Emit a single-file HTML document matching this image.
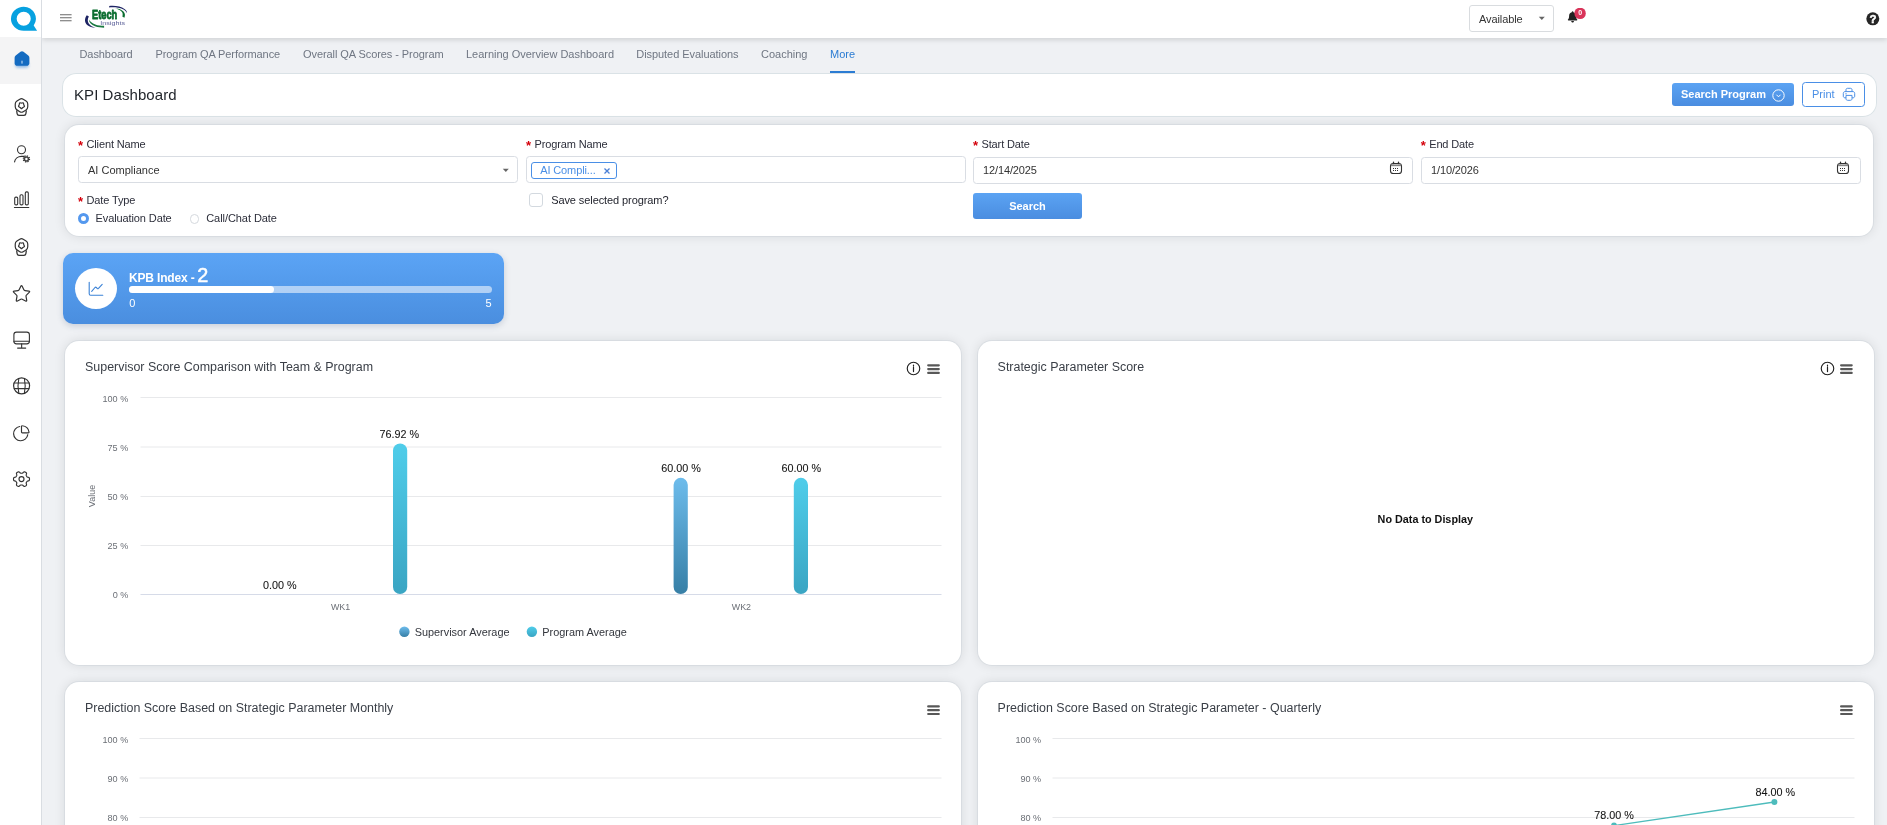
<!DOCTYPE html>
<html lang="en">
<head>
<meta charset="utf-8">
<title>KPI Dashboard</title>
<style>
*{box-sizing:border-box}
html,body{margin:0;padding:0}
body{width:1887px;height:825px;overflow:hidden;background:#eff1f4;font-family:"Liberation Sans",sans-serif;color:#222;position:relative;font-size:11px}
#wrap{position:absolute;left:0;top:0;width:1887px;height:825px;overflow:hidden;will-change:transform}
.abs{position:absolute}
#side{position:absolute;left:0;top:0;width:42px;height:825px;background:#fff;border-right:1px solid #d9dde2}
#side .act{position:absolute;left:0;top:37px;width:41px;height:47px;background:#f4f4f5}
#side svg{position:absolute}
#top{position:absolute;left:42px;top:0;width:1845px;height:38px;background:#fff;box-shadow:0 2px 5px rgba(0,0,0,.13)}
#tabs{position:absolute;left:0;top:0}
#tabs span{position:absolute;top:47px;white-space:nowrap;font-size:11px;color:#6f7682;line-height:14px}
#tabs span.on{color:#2b7cd3}
.card{position:absolute;background:#fff;border-radius:14px;box-shadow:0 0 0 1px rgba(200,208,214,.42),0 0 12px rgba(20,25,30,.11)}
.lbl{position:absolute;font-size:11px;color:#2c2e3a;white-space:nowrap;line-height:14px;letter-spacing:-.13px}
.lbl b{color:#d4000b;font-weight:bold;font-size:13px;margin-right:3.550px;position:relative;top:2.200px}
.inp{position:absolute;height:27px;border:1px solid #d9dde3;border-radius:3.500px;background:#fff;font-size:11px;color:#333;line-height:25px;padding-left:9px;white-space:nowrap}
.ttl{position:absolute;font-size:12px;color:#3a3f47;white-space:nowrap;line-height:15px}
svg text{font-family:"Liberation Sans",sans-serif}
</style>
</head>
<body>
<div id="wrap">

<!-- top bar -->
<div id="top">
  <!-- hamburger -->
  <svg class="abs" style="left:17px;top:12px" width="14" height="11" viewBox="0 0 14 11">
    <path d="M1 2.800h11.600M1 5.800h11.600M1 8.700h11.600" stroke="#6a6a6a" stroke-width="1.100" fill="none"/>
  </svg>
  <!-- Etech Insights logo -->
  <svg class="abs" style="left:42px;top:4px" width="46" height="26" viewBox="84 4 46 26">
    <path d="M86.800 15.200C84.300 18.500 84.300 22.500 87.500 25.200C89.800 27 92.500 27.700 95.500 27.600C92.500 27 90.300 25.800 88.900 23.800C87.300 21.500 87.500 19 88.900 16.600Z" fill="#1d2363"/>
    <path d="M88.900 19.600C89.100 22.700 91.300 25 95 26.300C98 27.300 101 27.600 104.100 27.700L104.100 25.700C101 25.700 98 25.400 95.300 24.400C92.200 23.300 90.100 21.800 88.900 19.600Z" fill="#1a7a41"/>
    <path d="M109.200 6C115 5.400 121 6.500 124.500 9C126.300 10.300 127.200 11.700 126.800 13.200C126.300 11.500 125 10.200 123 9.200C119 7.300 114 7.100 109.200 7.400Z" fill="#1d2363"/>
    <path d="M114 8C118 8.300 121.500 9.500 123.500 11.500C125.200 13.200 125.300 15.500 124.400 17.800L122.300 16.600C123 14.800 122.800 13 121.500 11.600C119.800 9.800 117 8.700 114 8Z" fill="#0b6e30"/>
    <text x="92" y="18.800" font-size="12.300" font-weight="bold" fill="#0a6d2f" stroke="#0a6d2f" stroke-width=".8" stroke-linejoin="round" textLength="25.200" lengthAdjust="spacingAndGlyphs">Etech</text>
    <text x="100.300" y="24.700" font-size="6.200" fill="#5a5f98" textLength="24.700" lengthAdjust="spacingAndGlyphs">Insights</text>
  </svg>
  <!-- Available -->
  <div class="abs" style="left:1427px;top:5px;width:85px;height:27px;border:1px solid #d9dcdf;border-radius:3px;background:#fff;font-size:11px;line-height:26.500px;letter-spacing:-.1px;padding-left:9px;color:#333">Available</div>
  <svg class="abs" style="left:1496px;top:16px" width="8" height="5" viewBox="0 0 8 5"><path d="M.8 .8h6L3.800 4z" fill="#666"/></svg>
  <!-- bell -->
  <svg class="abs" style="left:1524px;top:8px" width="24" height="18" viewBox="0 0 24 18">
    <path d="M6.600 3.200c.5 0 .8 .3 .8 .8v.3c1.700 .4 2.700 1.800 2.700 3.600c0 2 .5 2.900 1.100 3.600c.3 .3 .2 .9-.4 .9H2.400c-.6 0-.7-.6-.4-.9c.6-.7 1.100-1.600 1.100-3.600c0-1.800 1-3.200 2.700-3.600V4c0-.5 .3-.8 .8-.8zM5.200 13.100h2.800c0 .9-.6 1.500-1.400 1.500s-1.400-.6-1.400-1.500z" fill="#222"/>
    <circle cx="14.100" cy="5.400" r="5.700" fill="#d9345a"/>
    <text x="14.100" y="7.300" font-size="7" font-weight="bold" fill="#fff" text-anchor="middle">0</text>
  </svg>
  <!-- help -->
  <svg class="abs" style="left:1823px;top:11px" width="16" height="16" viewBox="0 0 16 16">
    <circle cx="7.800" cy="7.800" r="6.500" fill="#262626"/>
    <text x="7.900" y="11.700" font-size="11.500" font-weight="bold" fill="#fff" stroke="#fff" stroke-width=".45" text-anchor="middle">?</text>
  </svg>
</div>

<!-- sidebar -->
<div id="side">
  <div class="act"></div>
<svg class="abs" style="left:0;top:0" width="42" height="825" viewBox="0 0 42 825">
  <g fill="none" stroke="#333" stroke-width="1.100" stroke-linecap="round">
    <path d="M19.80 99.16Q21.50 98.10 23.20 99.16L26.05 100.94Q27.75 102.00 27.75 104.00L27.75 106.80Q27.75 108.80 26.07 109.88L23.18 111.72Q21.50 112.80 19.82 111.72L16.93 109.88Q15.25 108.80 15.25 106.80L15.25 104.00Q15.25 102.00 16.95 100.94Z" stroke-width="1.200"/>
    <path d="M21.86 108.45Q21.50 108.80 21.14 108.45L20.45 107.79Q20.09 107.44 19.65 107.21L18.80 106.76Q18.36 106.52 18.58 106.07L19.00 105.21Q19.22 104.76 19.30 104.27L19.47 103.32Q19.56 102.83 20.06 102.90L21.00 103.03Q21.50 103.10 22.00 103.03L22.94 102.90Q23.44 102.83 23.53 103.32L23.70 104.27Q23.78 104.76 24.00 105.21L24.42 106.07Q24.64 106.52 24.20 106.76L23.35 107.21Q22.91 107.44 22.55 107.79Z" stroke-width="1.200"/>
    <path d="M16.700 110.8l.4 2.800c.15 1.100 .8 1.700 1.900 1.700h5c1.100 0 1.750-.6 1.900-1.700l.4-2.800" stroke-width="1.250"/>
    <!-- user gear -->
    <circle cx="21.500" cy="149.800" r="4"/>
    <path d="M14.600 161.800C15 158.500 18 156.400 21.500 156.400L24 156.400" stroke-width="1.200"/>
    <circle cx="26.400" cy="158.900" r="2" stroke-width="1.500" stroke="#444"/>
    <circle cx="26.400" cy="158.900" r="3.100" stroke-width="1.300" stroke-dasharray="1.250 1.185" stroke-linecap="butt"/>
    <!-- bars -->
    <rect x="14.700" y="197.100" width="3" height="7.800" rx="1.200"/>
    <rect x="20" y="194.700" width="3" height="10.200" rx="1.200"/>
    <rect x="25.300" y="191.900" width="3" height="13" rx="1.200"/>
    <path d="M14.400 207.500H28.800"/>
    <path d="M19.80 239.16Q21.50 238.10 23.20 239.16L26.05 240.94Q27.75 242.00 27.75 244.00L27.75 246.80Q27.75 248.80 26.07 249.88L23.18 251.72Q21.50 252.80 19.82 251.72L16.93 249.88Q15.25 248.80 15.25 246.80L15.25 244.00Q15.25 242.00 16.95 240.94Z" stroke-width="1.200"/>
    <path d="M21.86 248.45Q21.50 248.80 21.14 248.45L20.45 247.79Q20.09 247.44 19.65 247.21L18.80 246.76Q18.36 246.52 18.58 246.07L19.00 245.21Q19.22 244.76 19.30 244.27L19.47 243.32Q19.56 242.83 20.06 242.90L21.00 243.03Q21.50 243.10 22.00 243.03L22.94 242.90Q23.44 242.83 23.53 243.32L23.70 244.27Q23.78 244.76 24.00 245.21L24.42 246.07Q24.64 246.52 24.20 246.76L23.35 247.21Q22.91 247.44 22.55 247.79Z" stroke-width="1.200"/>
    <path d="M16.700 250.8l.4 2.800c.15 1.100 .8 1.700 1.900 1.700h5c1.100 0 1.750-.6 1.900-1.700l.4-2.800" stroke-width="1.250"/>
    <!-- star -->
    <path d="M20.80 286.34Q21.50 284.90 22.20 286.34L23.85 289.76Q24.20 290.48 25.00 290.59L28.76 291.11Q30.34 291.33 29.19 292.43L26.45 295.07Q25.87 295.62 26.02 296.41L26.68 300.15Q26.97 301.72 25.56 300.97L22.21 299.18Q21.50 298.80 20.79 299.18L17.44 300.97Q16.03 301.72 16.32 300.15L16.98 296.41Q17.13 295.62 16.55 295.07L13.81 292.43Q12.66 291.33 14.24 291.11L18.00 290.59Q18.80 290.48 19.15 289.76Z" stroke-linejoin="round" stroke-width="1.200"/>
    <!-- monitor -->
    <rect x="13.900" y="332.100" width="15.500" height="11.800" rx="2.600"/>
    <path d="M13.900 341.300H29.400M21.650 343.900V348M17.600 348.100H25.700"/>
    <!-- globe -->
    <g transform="translate(0,.6)"><circle cx="21.600" cy="385.200" r="8" stroke-width="1.200"/>
    <path d="M14.300 382.400H28.900M14.300 388H28.900M18.800 377.900C17.800 382.500 17.800 388 18.800 392.500M24.400 377.900C25.400 382.500 25.400 388 24.400 392.500"/></g>
    <!-- pie -->
    <path d="M19.700 426.500A7.150 7.150 0 1 0 27.800 434.700" stroke-width="1.150"/>
    <path d="M22.300 425.800C21.800 425.700 21.500 426 21.500 426.500V432C21.500 432.500 21.800 432.800 22.300 432.800H28.300C28.800 432.800 29.100 432.500 29 432C28.500 428.600 25.700 426.100 22.300 425.800Z" stroke-linejoin="round" stroke-width="1.150"/>
    <!-- gear -->
    <path d="M29.50 479.10L29.47 479.62L29.37 480.14L29.04 480.60L28.21 480.90L27.38 481.10L27.01 481.38L26.80 481.71L26.61 482.05L26.41 482.38L26.23 482.73L26.17 483.20L26.41 484.01L26.57 484.88L26.33 485.39L25.94 485.74L25.50 486.03L25.03 486.27L24.54 486.43L23.97 486.38L23.30 485.81L22.71 485.19L22.28 485.01L21.89 485.00L21.50 485.00L21.11 485.00L20.72 485.01L20.29 485.19L19.70 485.81L19.03 486.38L18.46 486.43L17.97 486.27L17.50 486.03L17.06 485.74L16.67 485.39L16.43 484.88L16.59 484.01L16.83 483.20L16.77 482.73L16.59 482.38L16.39 482.05L16.20 481.71L15.99 481.38L15.62 481.10L14.79 480.90L13.96 480.60L13.63 480.14L13.53 479.62L13.50 479.10L13.53 478.58L13.63 478.06L13.96 477.60L14.79 477.30L15.62 477.10L15.99 476.82L16.20 476.49L16.39 476.15L16.59 475.82L16.77 475.47L16.83 475.00L16.59 474.19L16.43 473.32L16.67 472.81L17.06 472.46L17.50 472.17L17.97 471.93L18.46 471.77L19.03 471.82L19.70 472.39L20.29 473.01L20.72 473.19L21.11 473.20L21.50 473.20L21.89 473.20L22.28 473.19L22.71 473.01L23.30 472.39L23.97 471.82L24.54 471.77L25.03 471.93L25.50 472.17L25.94 472.46L26.33 472.81L26.57 473.32L26.41 474.19L26.17 475.00L26.23 475.47L26.41 475.82L26.61 476.15L26.80 476.49L27.01 476.82L27.38 477.10L28.21 477.30L29.04 477.60L29.37 478.06L29.47 478.58Z" stroke-linejoin="round" stroke-width="1.150"/>
    <circle cx="21.500" cy="479.100" r="2.500" stroke-width="1.150"/>
  </g>
</svg>
  <!-- Q logo -->
  <svg style="left:10px;top:5px" width="30" height="28" viewBox="0 0 30 28">
    <path d="M13.7 1.7a12.75 12.05 0 1 0 0 24.1h13.4l-3.4-5.3a12.75 12.05 0 0 0-10-18.8zm0 5a7.05 7.05 0 1 1 0 14.1a7.05 7.05 0 0 1 0-14.1z" fill="#07a1e0" fill-rule="evenodd"/>
  </svg>
  <!-- home -->
  <svg style="left:11px;top:47px" width="22" height="26" viewBox="0 0 22 26">
    <defs><filter id="hb" x="-50%" y="-50%" width="200%" height="200%"><feGaussianBlur stdDeviation="1.600"/></filter></defs>
    <rect x="4.5" y="15.5" width="13" height="5" rx="2" fill="#2f7fd6" opacity=".55" filter="url(#hb)"/>
    <path d="M11 4.2c.5 0 1 .2 1.500 .6l4.800 3.700c.7 .5 1.100 1.300 1.100 2.200v5.500c0 1.500-1.200 2.600-2.600 2.600H6.200c-1.500 0-2.600-1.200-2.600-2.600v-5.500c0-.9 .4-1.700 1.100-2.200l4.800-3.700c.45-.4 1-.6 1.500-.6z" fill="#146bc1"/>
    <rect x="10.400" y="13.700" width="1.200" height="2.900" fill="#b3d0ee"/>
  </svg>
</div>

<!-- tabs -->
<div id="tabs">
  <span style="left:79.500px;letter-spacing:-.08px">Dashboard</span>
  <span style="left:155.500px;letter-spacing:-.09px">Program QA Performance</span>
  <span style="left:303px;letter-spacing:-.07px">Overall QA Scores - Program</span>
  <span style="left:466px;letter-spacing:-.02px">Learning Overview Dashboard</span>
  <span style="left:636.300px;letter-spacing:-.06px">Disputed Evaluations</span>
  <span style="left:761px">Coaching</span>
  <span class="on" style="left:830px">More</span>
  <div class="abs" style="left:830px;top:71px;width:25px;height:2px;background:#2b7cd3"></div>
</div>

<!-- title card -->
<div class="card" id="tcard" style="left:62px;top:73px;width:1815px;height:43.500px;box-shadow:inset 0 0 0 1px rgba(205,216,222,.75)">
  <div class="abs" id="ttext" style="left:12px;top:12px;font-size:15px;letter-spacing:.07px;line-height:19px;color:#1f2329;white-space:nowrap">KPI Dashboard</div>
  <div class="abs" id="sbtn" style="left:1610px;top:10px;width:122px;height:23px;border-radius:3px;background:linear-gradient(180deg,#5ba3f3,#4a8de0);color:#fff;font-size:11px;font-weight:bold;line-height:23px;padding-left:9px;white-space:nowrap">Search Program</div>
  <svg class="abs" style="left:1709.300px;top:14.500px" width="15" height="15" viewBox="0 0 15 15"><circle cx="7.500" cy="7.500" r="5.700" fill="none" stroke="#fff" stroke-width="1"/><path d="M5.700 7l1.800 1.800l1.800-1.800" fill="none" stroke="#fff" stroke-width="1" stroke-linecap="round" stroke-linejoin="round"/></svg>
  <div class="abs" id="pbtn" style="left:1740px;top:9px;width:63px;height:25px;border-radius:3.500px;border:1.200px solid #4a8fe6;background:#fff;color:#4a8fe6;font-size:11px;line-height:22.600px;padding-left:9px;white-space:nowrap">Print</div>
  <svg class="abs" style="left:1780px;top:14px" width="14" height="15" viewBox="0 0 14 15"><g fill="none" stroke="#4a8fe6" stroke-width="1" stroke-linejoin="round"><path d="M4 4.500V2.800c0-.9 .6-1.500 1.500-1.500h3c.9 0 1.500 .6 1.500 1.500v1.700"/><path d="M4 10.800H3c-1 0-1.700-.7-1.700-1.700V6.400c0-1 .7-1.800 1.700-1.800h8c1 0 1.700 .8 1.700 1.800v2.700c0 1-.7 1.700-1.700 1.700h-1"/><path d="M4 8.400h6v3.300c0 1-.6 1.600-1.600 1.600H5.600c-1 0-1.600-.6-1.600-1.600z"/><path d="M3.300 6.800h1.400"/></g></svg>
</div>

<!-- filter card -->
<div class="card" id="fcard" style="left:65px;top:124.500px;width:1808px;height:111.500px">
  <div class="lbl" style="left:13px;top:12.5px"><b>*</b>Client Name</div>
  <div class="inp" style="left:13px;top:31.500px;width:440px;height:27px;line-height:26.300px">AI Compliance</div>
  <svg class="abs" style="left:437px;top:43.0px" width="8" height="5" viewBox="0 0 8 5"><path d="M.8 .8h6L3.800 4z" fill="#666"/></svg>
  <div class="lbl" style="left:13px;top:68.5px"><b>*</b>Date Type</div>
  <div class="abs" style="left:12.6px;top:88.7px;width:11px;height:11px;border-radius:50%;border:3.400px solid #5498ee;background:#fff"></div>
  <div class="lbl" style="left:30.6px;top:86.400px;letter-spacing:-.11px">Evaluation Date</div>
  <div class="abs" style="left:124.5px;top:89.7px;width:9.500px;height:9.500px;border-radius:50%;border:1px solid #d5d9de;background:#fff"></div>
  <div class="lbl" style="left:141.2px;top:86.400px;letter-spacing:-.06px">Call/Chat Date</div>

  <div class="lbl" style="left:461px;top:12.5px"><b>*</b>Program Name</div>
  <div class="inp" style="left:461px;top:31.500px;width:440px;height:27px"></div>
  <div class="abs" style="left:466.2px;top:37.9px;width:86px;height:17px;border:1.200px solid #4a8fe6;border-radius:3px;background:#fff;color:#4a8fe6;font-size:11px;line-height:14.600px;letter-spacing:-.12px;padding-left:8px;white-space:nowrap">AI Compli...</div>
  <svg class="abs" style="left:538px;top:42.5px" width="8" height="8" viewBox="0 0 8 8"><path d="M1.500 1.500l5 5M6.500 1.500l-5 5" stroke="#4a7fd6" stroke-width="1.300"/></svg>
  <div class="abs" style="left:464.2px;top:68.500px;width:14px;height:14px;border:1px solid #d3d9df;border-radius:3px;background:#fff"></div>
  <div class="lbl" style="left:486.2px;top:68.8px;letter-spacing:-.09px;color:#23252e">Save selected program?</div>

  <div class="lbl" style="left:908px;top:12.500px"><b>*</b>Start Date</div>
  <div class="inp" style="left:908px;top:32.500px;width:440px;height:27px;line-height:25.400px;letter-spacing:-.12px">12/14/2025</div>
  <svg class="abs" style="left:1323.500px;top:35.500px" width="14" height="15" viewBox="0 0 14 15"><rect x="1.500" y="3.500" width="11" height="10" rx="2.800" fill="none" stroke="#333" stroke-width="1.100"/><path d="M2 5.300h10" stroke="#858585" stroke-width="1.700"/><path d="M4.500 2.100v1.400M9.500 2.100v1.400" stroke="#333" stroke-width="1.300" stroke-linecap="round"/><g fill="#333"><rect x="4" y="8" width="1" height="1"/><rect x="6" y="8" width="1" height="1"/><rect x="8" y="8" width="1" height="1"/><rect x="4" y="10" width="1" height="1"/><rect x="6" y="10" width="1" height="1"/><rect x="8" y="10" width="1" height="1"/></g></svg>
  <div class="abs" id="srch" style="left:908px;top:68.500px;width:109px;height:26px;border-radius:3px;background:linear-gradient(180deg,#5ba3f3,#4a8de0);color:#fff;font-size:11px;font-weight:bold;line-height:26px;text-align:center">Search</div>

  <div class="lbl" style="left:1355.700px;top:12.500px"><b>*</b>End Date</div>
  <div class="inp" style="left:1356px;top:32.500px;width:440px;height:27px;line-height:25.400px;letter-spacing:-.12px">1/10/2026</div>
  <svg class="abs" style="left:1770.500px;top:35.500px" width="14" height="15" viewBox="0 0 14 15"><rect x="1.500" y="3.500" width="11" height="10" rx="2.800" fill="none" stroke="#333" stroke-width="1.100"/><path d="M2 5.300h10" stroke="#858585" stroke-width="1.700"/><path d="M4.500 2.100v1.400M9.500 2.100v1.400" stroke="#333" stroke-width="1.300" stroke-linecap="round"/><g fill="#333"><rect x="4" y="8" width="1" height="1"/><rect x="6" y="8" width="1" height="1"/><rect x="8" y="8" width="1" height="1"/><rect x="4" y="10" width="1" height="1"/><rect x="6" y="10" width="1" height="1"/><rect x="8" y="10" width="1" height="1"/></g></svg>
</div>

<!-- KPB card -->
<div class="abs" id="kpb" style="left:63px;top:253px;width:441px;height:71px;border-radius:10px;background:linear-gradient(180deg,#5ba4f5,#4a8edf);box-shadow:0 2px 6px rgba(60,80,120,.22)">
  <div class="abs" style="left:12px;top:15px;width:42px;height:41px;border-radius:50%;background:#fff"></div>
  <svg class="abs" style="left:24px;top:26.500px" width="18" height="18" viewBox="0 0 18 18"><g fill="none" stroke="#3b82d6" stroke-width="1.100" stroke-linecap="round" stroke-linejoin="round"><path d="M2.200 2.200v11.600c0 .9 .5 1.400 1.400 1.400h12.200"/><path d="M4.700 11.300l3.300-3.800c.4-.4 .9-.4 1.300 0l.9 .9c.4 .4 .9 .4 1.300 0l3.700-4.100"/></g></svg>
  <div class="abs" id="kt" style="left:66px;top:11.300px;white-space:nowrap;color:#fff;font-weight:bold;font-size:12px;letter-spacing:-.17px;line-height:22px"><span id="kt1">KPB Index - </span><span style="font-size:19.800px;font-weight:normal;-webkit-text-stroke:.55px #fff;margin-left:-.5px">2</span></div>
  <div class="abs" style="left:66px;top:33px;width:363px;height:7px;border-radius:3.500px;background:rgba(255,255,255,.55)"></div>
  <div class="abs" style="left:66px;top:33px;width:145px;height:7px;border-radius:3.500px;background:#fff"></div>
  <div class="abs" style="left:66.300px;top:43px;color:#fff;font-size:11px;line-height:14px">0</div>
  <div class="abs" style="left:422.500px;top:43px;color:#fff;font-size:11px;line-height:14px">5</div>
</div>

<!-- chart cards -->
<div class="card" id="c1" style="left:65px;top:341px;width:896px;height:323.500px">
<svg class="abs" style="left:0;top:0" width="896" height="324" viewBox="65 341 896 324">
  <defs>
    <linearGradient id="gsup" x1="0" y1="0" x2="0" y2="1"><stop offset="0" stop-color="#6dbcec"/><stop offset="1" stop-color="#377fa6"/></linearGradient>
    <linearGradient id="gprg" x1="0" y1="0" x2="0" y2="1"><stop offset="0" stop-color="#4fcdea"/><stop offset="1" stop-color="#3aa5c3"/></linearGradient>
  </defs>
  <text x="85" y="371" font-size="12.450" fill="#3a3f47" id="t1">Supervisor Score Comparison with Team &amp; Program</text>
  <g fill="none" stroke="#222" stroke-width="1.150"><circle cx="913.5" cy="368.500" r="6.250"/><path d="M913.5 367.300v4.300M913.5 365.200v.9" stroke-width="1.200" stroke-linecap="round"/></g>
  <path d="M928.2 365.3h10.600M928.2 369.1h10.600M928.2 372.9h10.600" stroke="#585858" stroke-width="2.200" stroke-linecap="round" fill="none"/>
  <g stroke="#e8e9eb" stroke-width="1"><path d="M140.500 397.500H941.500M140.500 447H941.500M140.500 496.500H941.500M140.500 545.500H941.500"/></g>
  <path d="M140.500 594.500H941.500" stroke="#d6dbe8" stroke-width="1.200"/>
  <g font-size="9.100" fill="#6b6f76" text-anchor="end">
    <text x="128.300" y="402">100 %</text><text x="128.300" y="450.600">75 %</text><text x="128.300" y="499.900">50 %</text><text x="128.300" y="548.800">25 %</text><text x="128.300" y="598">0 %</text>
  </g>
  <text transform="translate(95,496) rotate(-90)" font-size="9" fill="#6b6f76" text-anchor="middle">Value</text>
  <rect x="393" y="443.500" width="14.200" height="150.500" rx="7.100" fill="url(#gprg)"/>
  <rect x="673.600" y="477.800" width="14.200" height="116.200" rx="7.100" fill="url(#gsup)"/>
  <rect x="793.800" y="477.800" width="14.200" height="116.200" rx="7.100" fill="url(#gprg)"/>
  <g font-size="10.800" fill="#141414" stroke="#141414" stroke-width=".08" text-anchor="middle">
    <text x="399.400" y="438">76.92 %</text><text x="279.700" y="589">0.00 %</text><text x="681.100" y="472.200">60.00 %</text><text x="801.300" y="472.200">60.00 %</text>
  </g>
  <g font-size="8.900" fill="#6b6f76" text-anchor="middle"><text x="340.600" y="610">WK1</text><text x="741.400" y="610">WK2</text></g>
  <circle cx="404.400" cy="631.700" r="5.200" fill="url(#gsup)"/><circle cx="531.900" cy="631.700" r="5.200" fill="url(#gprg)"/>
  <g font-size="10.900" fill="#33363d"><text x="414.700" y="635.800">Supervisor Average</text><text x="542.300" y="635.800">Program Average</text></g>
</svg>
</div>
<div class="card" id="c2" style="left:978px;top:341px;width:896px;height:323.500px">
<svg class="abs" style="left:0;top:0" width="896" height="324" viewBox="978 341 896 324">
  <text x="997.600" y="371" font-size="12.450" fill="#3a3f47">Strategic Parameter Score</text>
  <g fill="none" stroke="#222" stroke-width="1.150"><circle cx="1827.5" cy="368.500" r="6.250"/><path d="M1827.5 367.300v4.300M1827.5 365.200v.9" stroke-width="1.200" stroke-linecap="round"/></g>
  <path d="M1841.1 365.3h10.600M1841.1 369.1h10.600M1841.1 372.9h10.600" stroke="#585858" stroke-width="2.200" stroke-linecap="round" fill="none"/>
  <text x="1425.300" y="523.200" font-size="10.800" font-weight="bold" fill="#111" text-anchor="middle">No Data to Display</text>
</svg>
</div>
<div class="card" id="c3" style="left:65px;top:682px;width:896px;height:323px">
<svg class="abs" style="left:0;top:0" width="896" height="143" viewBox="65 682 896 143">
  <text x="85" y="712" font-size="12.450" fill="#3a3f47">Prediction Score Based on Strategic Parameter Monthly</text>
  <path d="M928.2 706.4h10.600M928.2 710.2h10.600M928.2 714.0h10.600" stroke="#585858" stroke-width="2.200" stroke-linecap="round" fill="none"/>
  <g stroke="#e8e9eb" stroke-width="1"><path d="M139.500 738.500H941.500M139.500 778H941.500M139.500 817.500H941.500"/></g>
  <g font-size="9.100" fill="#6b6f76" text-anchor="end"><text x="128.300" y="743">100 %</text><text x="128.300" y="781.700">90 %</text><text x="128.300" y="820.700">80 %</text></g>
</svg>
</div>
<div class="card" id="c4" style="left:978px;top:682px;width:896px;height:323px">
<svg class="abs" style="left:0;top:0" width="896" height="143" viewBox="978 682 896 143">
  <text x="997.600" y="712" font-size="12.450" fill="#3a3f47">Prediction Score Based on Strategic Parameter - Quarterly</text>
  <path d="M1841.1 706.4h10.600M1841.1 710.2h10.600M1841.1 714.0h10.600" stroke="#585858" stroke-width="2.200" stroke-linecap="round" fill="none"/>
  <g stroke="#e8e9eb" stroke-width="1"><path d="M1052.500 738.500H1854.500M1052.500 778H1854.500M1052.500 817.500H1854.500"/></g>
  <g font-size="9.100" fill="#6b6f76" text-anchor="end"><text x="1041.200" y="743">100 %</text><text x="1041.200" y="781.700">90 %</text><text x="1041.200" y="820.700">80 %</text></g>
  <path d="M1614 825.600L1774.400 802" stroke="#4dbcbc" stroke-width="1.300" fill="none"/>
  <circle cx="1614" cy="825.600" r="3" fill="#4dbcbc"/><circle cx="1774.400" cy="802" r="3" fill="#4dbcbc"/>
  <g font-size="10.800" fill="#141414" stroke="#141414" stroke-width=".08" text-anchor="middle"><text x="1775.200" y="795.800">84.00 %</text><text x="1614" y="819.300">78.00 %</text></g>
</svg>
</div>

</div>
</body>
</html>
